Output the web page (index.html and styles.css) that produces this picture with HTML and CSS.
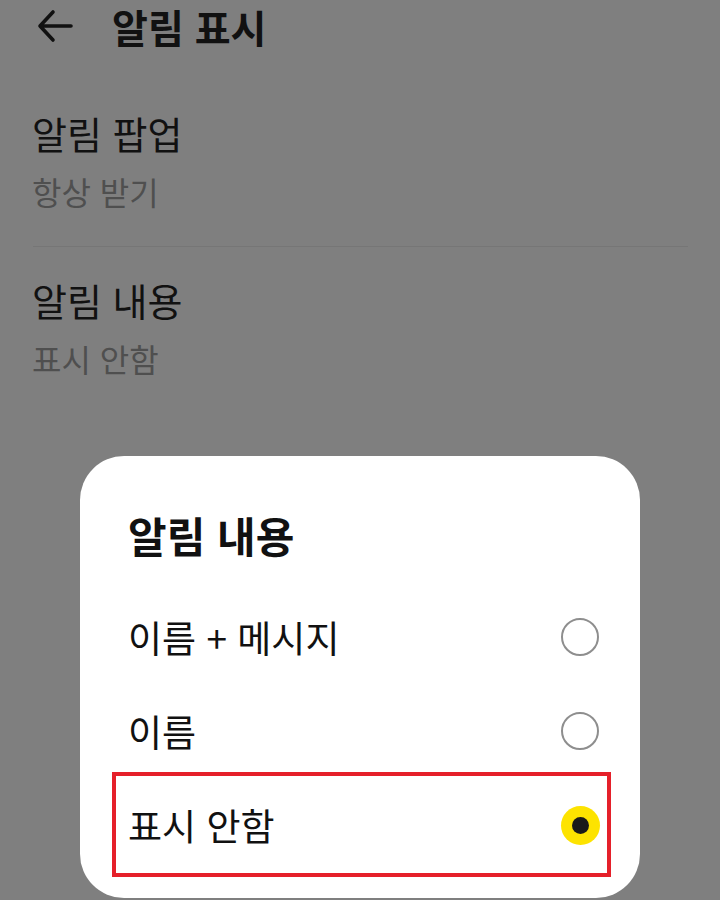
FILE: index.html
```html
<!DOCTYPE html>
<html lang="ko">
<head>
<meta charset="utf-8">
<title>알림 표시</title>
<link rel="stylesheet" href="styles.css">
</head>
<body>
<div class="screen">
  <header class="appbar">
    <svg class="back" width="36" height="34" viewBox="0 0 36 34" aria-hidden="true">
      <path d="M34 17H3M16 3L3 17L16 31" fill="none" stroke="#111" stroke-width="3.6" stroke-linecap="round" stroke-linejoin="round"/>
    </svg>
    <h1 class="appbar-title">알림 표시</h1>
  </header>
  <section class="setting first">
    <div class="setting-title">알림 팝업</div>
    <div class="setting-value">항상 받기</div>
  </section>
  <div class="divider"></div>
  <section class="setting second">
    <div class="setting-title">알림 내용</div>
    <div class="setting-value">표시 안함</div>
  </section>

  <div class="dialog">
    <h2 class="dialog-title">알림 내용</h2>
    <ul class="options">
      <li class="option"><span class="option-label">이름 + 메시지</span><span class="radio"></span></li>
      <li class="option"><span class="option-label">이름</span><span class="radio"></span></li>
      <li class="option"><span class="option-label">표시 안함</span><span class="radio checked"></span></li>
    </ul>
    <div class="highlight"></div>
  </div>
</div>
</body>
</html>
```
FILE: styles.css
```css
* { box-sizing: border-box; }
html, body {
  margin: 0;
  padding: 0;
  background: #7f7f7f;
}
body {
  font-family: "Noto Sans CJK KR", "Noto Sans", sans-serif;
  color: #111;
}
.screen {
  position: relative;
  width: 720px;
  height: 900px;
  overflow: hidden;
}
.appbar {
  height: 52px;
  display: flex;
  align-items: center;
  padding-left: 37px;
  gap: 39px;
}
.back { display: block; flex: none; }
.appbar-title {
  margin: 0;
  font-size: 39px;
  font-weight: 700;
  line-height: 46px;
}
.setting {
  padding-left: 32px;
  display: flex;
  flex-direction: column;
  gap: 16px;
}
.setting.first { padding-top: 59px; padding-bottom: 35px; }
.setting.second { padding-top: 31px; }
.setting-title {
  font-size: 38px;
  line-height: 44px;
}
.setting-value {
  font-size: 32px;
  line-height: 40px;
  color: #4f4f4f;
}
.divider {
  height: 1px;
  margin: 0 32px 0 33px;
  background: #767676;
}
.dialog {
  position: absolute;
  left: 80px;
  top: 456px;
  width: 560px;
  height: 442px;
  background: #fff;
  border-radius: 44px;
  padding: 54px 41px 0 48px;
}
.dialog-title {
  margin: 0;
  font-size: 42px;
  font-weight: 700;
  line-height: 50px;
}
.options {
  list-style: none;
  margin: 30px 0 0;
  padding: 0;
}
.option {
  height: 94px;
  display: flex;
  align-items: center;
  justify-content: space-between;
}
.option-label {
  font-size: 37px;
  line-height: 44px;
}
.radio {
  width: 38px;
  height: 38px;
  border-radius: 50%;
  border: 2.5px solid #8e8e8e;
  flex: none;
  display: flex;
  align-items: center;
  justify-content: center;
}
.radio.checked {
  width: 39px;
  height: 39px;
  border: none;
  background: #fde300;
  margin-right: -0.5px;
}
.radio.checked::after {
  content: "";
  width: 17px;
  height: 17px;
  border-radius: 50%;
  background: #1a1a1a;
}
.highlight {
  position: absolute;
  left: 32px;
  top: 316px;
  width: 499px;
  height: 105px;
  border: 4px solid #e5202a;
  pointer-events: none;
}
```
